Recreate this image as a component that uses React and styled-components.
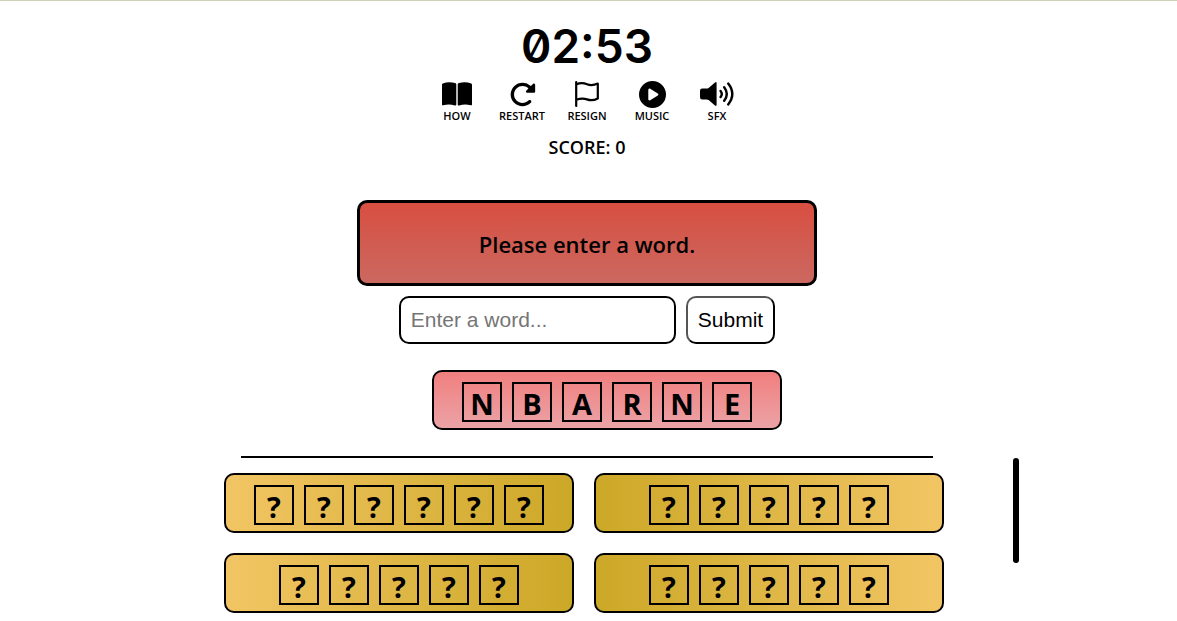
import React from "react";
import styled, { createGlobalStyle } from "styled-components";
import { FaRotateRight, FaCirclePlay } from "react-icons/fa6";

const GlobalStyle = createGlobalStyle`
  * { box-sizing: border-box; }
  body {
    margin: 0;
    background: #fff;
    color: #000;
    font-family: "Open Sans", "Noto Sans", sans-serif;
  }
`;

const Page = styled.div`
  display: flex;
  flex-direction: column;
  align-items: center;
  border-top: 1px solid #d0d0ba;
  padding: 22px 3px 0 0;
`;

const Timer = styled.time`
  font-family: Inter, sans-serif;
  font-weight: 600;
  font-size: 46px;
  line-height: 46px;
  font-feature-settings: "zero";
`;

const Toolbar = styled.nav`
  display: grid;
  grid-template-columns: repeat(5, 65px);
  margin-top: 10px;
`;

const ToolButton = styled.button`
  display: flex;
  flex-direction: column;
  align-items: center;
  border: 0;
  padding: 0;
  background: none;
  color: inherit;
  font-family: inherit;
  font-weight: 600;
  font-size: 11px;
  line-height: 14px;
  cursor: pointer;
`;

const IconSlot = styled.span`
  display: flex;
  align-items: center;
  justify-content: center;
  height: 30px;
`;

const Score = styled.p`
  margin: 12px 0 0;
  font-weight: 600;
  font-size: 18px;
  line-height: 24px;
`;

const Message = styled.div`
  display: flex;
  align-items: center;
  justify-content: center;
  width: 460px;
  max-width: 100%;
  min-height: 86px;
  margin-top: 41px;
  padding-top: 2px;
  border: 3px solid #000;
  border-radius: 10px;
  background: linear-gradient(#d84f41, #cb6860);
  font-weight: 600;
  font-size: 22px;
  line-height: 32px;
`;

const WordForm = styled.form`
  display: flex;
  gap: 10px;
  margin-top: 10px;
`;

const WordInput = styled.input`
  width: 277px;
  height: 48px;
  padding: 0 10px;
  border: 2px solid #000;
  border-radius: 10px;
  background: #fff;
  font-family: "Liberation Sans", sans-serif;
  font-size: 21px;
  &::placeholder { color: #757575; }
`;

const SubmitButton = styled.button`
  height: 48px;
  padding: 0 10px;
  border: 2px solid #000;
  border-color: #555 #000 #000 #555;
  border-radius: 10px;
  background: #fff;
  color: #000;
  font-family: "Liberation Sans", sans-serif;
  font-size: 21px;
`;

const backgrounds = {
  rack: "linear-gradient(#f17f7f, #eba3a6)",
  left: "linear-gradient(to right, #f2c564, #cca827)",
  right: "linear-gradient(to left, #f2c564, #cca827)",
};

const Card = styled.div`
  display: flex;
  justify-content: center;
  gap: 10px;
  width: 350px;
  height: 60px;
  padding-top: 10px;
  border: 2px solid #000;
  border-radius: 10px;
  background: ${(p) => backgrounds[p.$tone]};
`;

const RackArea = styled.div`
  margin-top: 26px;
  padding-left: 40px;
`;

const Tile = styled.span`
  width: 40px;
  height: 40px;
  padding-top: 2px;
  border: 2px solid #000;
  text-align: center;
  font-weight: 700;
  font-size: 29px;
  line-height: 36px;
`;

const Results = styled.section`
  display: flex;
  flex-direction: column;
  align-items: center;
  width: 100%;
  max-width: 864px;
  margin-top: 26px;
`;

const Divider = styled.hr`
  width: 80%;
  margin: 0;
  border: 0;
  border-top: 2px solid #000;
`;

const ScrollArea = styled.div`
  display: flex;
  width: 100%;
`;

const Board = styled.div`
  flex: 1;
  display: grid;
  grid-template-columns: repeat(2, 350px);
  justify-content: center;
  gap: 20px;
  padding-top: 15px;
`;

const Thumb = styled.div`
  width: 6px;
  height: 105px;
  border-radius: 3px;
  background: #000;
`;

const BookIcon = () => (
  <svg width="30" height="24" viewBox="0 0 30 24" fill="currentColor">
    <path d="M0 2.6Q0 1.8.8 1.5Q6.8-.8 13 1.1Q14.3 1.4 14.3 2.3V22.5Q14.3 23.7 12.8 23.4Q7 21.6 1.2 23.3Q0 23.6 0 22.4Z" />
    <path d="M30 2.6Q30 1.8 29.2 1.5Q23.2-.8 17 1.1Q15.7 1.4 15.7 2.3V22.5Q15.7 23.7 17.2 23.4Q23 21.6 28.8 23.3Q30 23.6 30 22.4Z" />
  </svg>
);

const FlagIcon = () => (
  <svg width="24" height="26" viewBox="0 0 24 26" fill="none" stroke="currentColor" strokeWidth="2.2" strokeLinecap="round" strokeLinejoin="round">
    <path d="M1.2 1.1V24.9M1.2 3.4C5 1.8 8.5 1.8 12 3.3S19 4.4 22.8 2.6V17.5C19 19.5 15.5 19.7 12 18.4S5 17.4 1.2 18.8" />
  </svg>
);

const SpeakerIcon = () => (
  <svg width="34" height="24" viewBox="0 0 34 24" fill="currentColor">
    <path d="M2.2 6.6H6.6Q7.8 6.6 8.6 5.9L15 .5Q16.6-.6 16.6 1.2V22.8Q16.6 24.6 15 23.5L8.6 18.1Q7.8 17.4 6.6 17.4H2.2Q0 17.4 0 15.2V8.8Q0 6.6 2.2 6.6Z" />
    <path d="M20.6 9Q23 12 20.6 15M24.2 5.2Q29.4 12 24.2 18.8M28.2 1.6Q36.4 12 28.2 22.4" fill="none" stroke="currentColor" strokeWidth="2.4" strokeLinecap="round" />
  </svg>
);

const tools = [
  ["HOW", <BookIcon />],
  ["RESTART", <FaRotateRight size={27} />],
  ["RESIGN", <FlagIcon />],
  ["MUSIC", <FaCirclePlay size={27} />],
  ["SFX", <SpeakerIcon />],
];

const answers = ["??????", "?????", "?????", "?????"];

const Word = ({ letters, tone }) => (
  <Card $tone={tone}>
    {[...letters].map((letter, i) => (
      <Tile key={i}>{letter}</Tile>
    ))}
  </Card>
);

export default function App() {
  return (
    <>
      <GlobalStyle />
      <Page>
        <Timer>02:53</Timer>
        <Toolbar>
          {tools.map(([label, icon]) => (
            <ToolButton key={label} type="button">
              <IconSlot>{icon}</IconSlot>
              {label}
            </ToolButton>
          ))}
        </Toolbar>
        <Score>SCORE: 0</Score>
        <Message role="status">Please enter a word.</Message>
        <WordForm onSubmit={(e) => e.preventDefault()}>
          <WordInput type="text" placeholder="Enter a word..." aria-label="Enter a word" />
          <SubmitButton type="submit">Submit</SubmitButton>
        </WordForm>
        <RackArea>
          <Word letters="NBARNE" tone="rack" />
        </RackArea>
        <Results>
          <Divider />
          <ScrollArea>
            <Board>
              {answers.map((letters, i) => (
                <Word key={i} letters={letters} tone={i % 2 ? "right" : "left"} />
              ))}
            </Board>
            <Thumb />
          </ScrollArea>
        </Results>
      </Page>
    </>
  );
}
